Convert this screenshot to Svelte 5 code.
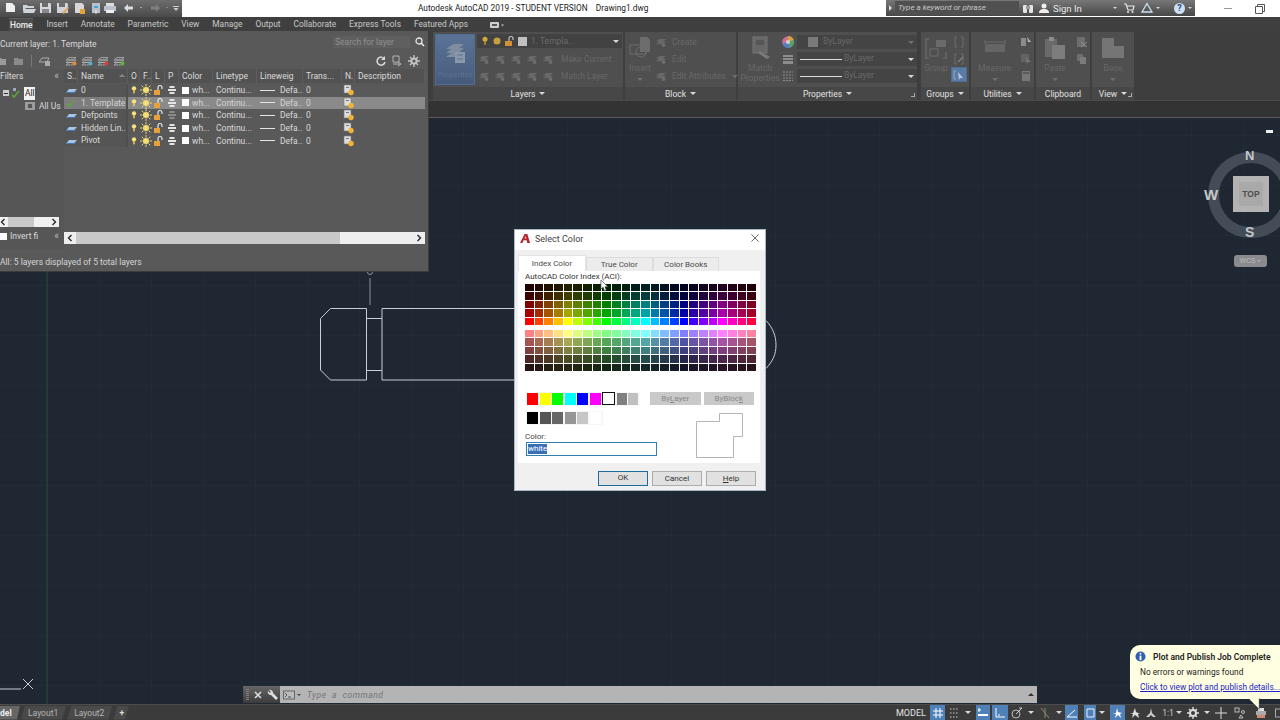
<script>
  const tabs = ['Home','Insert','Annotate','Parametric','View','Manage','Output','Collaborate','Express Tools','Featured Apps'];
  const layers = [
    { name:'0', cur:false },
    { name:'1. Template', cur:true },
    { name:'Defpoints', cur:false, noplot:true },
    { name:'Hidden Lin...', cur:false },
    { name:'Pivot', cur:false }
  ];
  function hsv(h,s,v){
    const f=(n)=>{const k=(n+h/60)%6;return Math.round(255*(v-v*s*Math.max(0,Math.min(k,4-k,1))));};
    return `rgb(${f(5)},${f(3)},${f(1)})`;
  }
  const hues = Array.from({length:24},(_,i)=>i*15);
  const top = [.12,.24,.5,.65,1].flatMap(v=>hues.map(h=>hsv(h,1,v)));
  const bot = [[.5,1],[.5,.65],[.5,.5],[.5,.3],[.5,.15]].flatMap(([s,v])=>hues.map(h=>hsv(h,s,v)));
  const std1 = ['#ff0000','#ffff00','#00ff00','#00ffff','#0000ff','#ff00ff'];
  const gray1 = ['#808080','#c0c0c0'];
  const std2 = ['#000000','#555555','#666666','#969696','#c6c6c6','#ffffff'];
  const toolsA = [0,1,2,3];
  const status = [
    {k:'grid',w:15,on:true,m:0},{k:'dots',w:18,m:0},{k:'arrow',w:10,m:3},{k:'infer',w:14,on:true,m:2},{k:'ortho',w:16,on:true,m:0},
    {k:'polar',w:18,m:0},{k:'arrow',w:10,m:0},{k:'osnap',w:18,m:0},{k:'arrow',w:10,m:1},{k:'angle',w:13,on:true,m:6},{k:'rect',w:12,on:true,m:0},
    {k:'arrow',w:12,m:2},{k:'anno',w:15,on:true,m:0},{k:'anno2',w:20,m:0},{k:'anno3',w:12,m:3},{k:'scale',w:16,m:0},{k:'arrow',w:5,m:4},
    {k:'gear',w:16,m:0},{k:'arrow',w:12,m:0},{k:'plus',w:16,m:0},{k:'iso',w:22,m:0},{k:'print',w:20,m:0},{k:'square',w:18,m:0}
  ];
</script>

{#snippet stack(c2)}
  <svg class="ico12" viewBox="0 0 12 12"><path d="M1 5 4 2.500h7L8 5zM1 7.500 4 5h7L8 7.500zM1 10 4 7.500h7L8 10z" fill="#5e5e5e" stroke="#bdbdbd" stroke-width=".7"/><circle cx="9.500" cy="8.500" r="2" fill={c2}/></svg>
{/snippet}
{#snippet layerFlat()}
  <svg class="ico12" viewBox="0 0 12 12"><path d="M1 9 4 5h8L9 9z" fill="#a9c4e8"/><path d="M1 9h8l3-4-3 3H2z" fill="#3f74b8"/></svg>
{/snippet}
{#snippet bulb()}
  <svg class="ico10" viewBox="0 0 10 12"><circle cx="5" cy="4" r="2.600" fill="#f7e27c"/><rect x="4" y="6" width="2" height="4" fill="#e5c652"/></svg>
{/snippet}
{#snippet sun()}
  <svg class="ico12" viewBox="0 0 12 12"><circle cx="6" cy="6" r="3" fill="#f5df73"/><path d="M6 0v2.500M6 9.500V12M0 6h2.500M9.500 6H12M1.700 1.700l1.800 1.800M8.500 8.500l1.800 1.800M10.300 1.700 8.500 3.500M3.500 8.500l-1.800 1.800" stroke="#e9d27a" stroke-width="1"/></svg>
{/snippet}
{#snippet lock()}
  <svg class="ico12" viewBox="0 0 12 12"><rect x="1" y="6" width="6" height="5" fill="#e8a13a"/><path d="M5 6V3.500a2 2 0 0 1 4 0V5" fill="none" stroke="#f0f0f0" stroke-width="1.100"/></svg>
{/snippet}
{#snippet printer(c)}
  <svg class="ico12" viewBox="0 0 12 12"><rect x="3.500" y="2" width="5" height="2" fill={c}/><rect x="2" y="5" width="8" height="2" fill={c}/><rect x="3.500" y="8" width="5" height="2" fill={c}/></svg>
{/snippet}
{#snippet note()}
  <svg class="ico12" viewBox="0 0 12 12"><rect x="1" y="1" width="7" height="8" fill="#ddd" stroke="#777" stroke-width=".6"/><rect x="3" y="3" width="3" height="1" fill="#777"/><circle cx="8" cy="8.500" r="2.700" fill="#f2b233"/></svg>
{/snippet}
{#snippet ghost(w)}
  <svg viewBox="0 0 14 12" class="ghost" style="width:{w}px"><path d="M1 5 5 2h8L9 5zM1 8 5 5h8L9 8z" fill="#777"/><circle cx="10" cy="9" r="2.200" fill="#7d7d7d"/></svg>
{/snippet}
{#snippet lar()}
  <svg class="sar" viewBox="0 0 6 8"><path d="M4.500 1 1.500 4l3 3" fill="none" stroke="#222" stroke-width="1.300"/></svg>
{/snippet}
{#snippet rar()}
  <svg class="sar" viewBox="0 0 6 8"><path d="M1.500 1l3 3-3 3" fill="none" stroke="#222" stroke-width="1.300"/></svg>
{/snippet}

<div class="root">
  <header class="title">
    <div class="qat">
      <svg viewBox="0 0 182 16" class="qat-ic">
        <path d="M6 3h6l3 3v6H6z" fill="#efefef"/>
        <path d="M23 5h4l1 1h6v2H26l-3 4zM25 9h11l-2 4H23z" fill="#cfd4da"/>
        <path d="M40 3h10l1 1v9H40z" fill="#d4d8dd"/><rect x="42" y="3" width="6" height="4" fill="#6d6d6d"/><rect x="42" y="9" width="7" height="4" fill="#888"/>
        <path d="M57 3h10l1 1v9H57z" fill="#cfd3d8"/><rect x="59" y="3" width="6" height="4" fill="#6d6d6d"/><path d="m62 13 6-6 1 1-5 6z" fill="#e1a052"/>
        <path d="M75 3h7l2 2v8h-9z" fill="#d8d8d8"/><rect x="80" y="9" width="5" height="5" fill="#e2a33d"/>
        <path d="M92 3h8v10h-8z" fill="#b9c0c8"/><path d="M94 6h4v2h-4z" fill="#39a9d9"/><path d="M96 10v4" stroke="#eee"/>
        <rect x="106" y="3" width="8" height="3" fill="#ddd"/><rect x="104" y="6" width="12" height="5" fill="#b9c3cf"/><rect x="106" y="10" width="8" height="3" fill="#eee"/>
        <path d="M124 8l4-4v2.500h5v3h-5V12z" fill="#d9dde2"/>
        <path d="m140 7 2 0-1 1.500z" fill="#ccc"/>
        <path d="M160 8l-4-4v2.500h-5v3h5V12z" fill="#7c7f83"/>
        <path d="m166 7 2 0-1 1.500z" fill="#999"/>
        <path d="M173 6h6v1h-6zm.5 2h5l-2.500 3z" fill="#ccc"/>
      </svg>
    </div>
    <div class="doc">Autodesk AutoCAD 2019 - STUDENT VERSION &nbsp;&nbsp; Drawing1.dwg</div>
    <div class="search">
      <span class="sa"></span>
      <span class="kw">Type a keyword or phrase</span>
      <div class="acct">
        <svg class="ico12" viewBox="0 0 12 12"><rect x="1" y="3" width="4" height="8" rx="1" fill="#e4e4e4"/><rect x="7" y="3" width="4" height="8" rx="1" fill="#e4e4e4"/><rect x="4" y="4" width="4" height="3" fill="#9c9c9c"/></svg>
        <svg class="ico12 user" viewBox="0 0 12 12"><circle cx="6" cy="4" r="2.500" fill="#eee"/><path d="M1 11c0-3 2-4 5-4s5 1 5 4z" fill="#eee"/></svg>
        <span class="sign">Sign In</span>
        <i class="tri sm"></i>
        <svg class="ico12 cart" viewBox="0 0 12 12"><path d="M1 2h2l2 6h5l1-4H4" fill="none" stroke="#e8e8e8" stroke-width="1.200"/><circle cx="5" cy="10" r="1" fill="#e8e8e8"/><circle cx="9.500" cy="10" r="1" fill="#e8e8e8"/></svg>
        <svg class="ico12 tria" viewBox="0 0 12 12"><path d="M6 1.500 11 10H1z" fill="none" stroke="#cfe0f0" stroke-width="1.300"/></svg>
        <i class="tri sm"></i>
        <span class="help">?</span>
        <i class="tri sm"></i>
      </div>
    </div>
    <div class="win">
      <span class="min"></span>
      <svg class="ico10" viewBox="0 0 10 10"><path d="M2.500 2.500v-2h7v7h-2M.5 2.500h7v7h-7z" fill="none" stroke="#555"/></svg>
    </div>
  </header>

  <nav class="tabs">
    {#each tabs as t, i}
      <span class="tab" class:active={i===0}>{t}</span>
    {/each}
    <svg class="cam" viewBox="0 0 14 8"><rect x="0" y="1" width="9" height="6" rx="1" fill="#cfcfcf"/><rect x="2" y="3" width="5" height="2" fill="#555"/><path d="m11 3.500 3 0-1.500 2z" fill="#bbb"/></svg>
  </nav>

  <section class="ribbon">
    <div class="panel p-layers">
      <div class="body layers-body">
        <div class="propbtn">
          <svg viewBox="0 0 24 24" class="bigic"><path d="M3 8 10 3h11l-6 5zM3 12l7-5h11l-6 5zM3 16l7-5h11l-6 5z" fill="#7f8da0"/><rect x="12" y="11" width="10" height="11" fill="#8a98ab"/><path d="M14 14h6M14 18h6" stroke="#5d708c"/></svg>
          <span>Properties</span>
        </div>
        <div class="lyr-tools">
          <div class="combo">
            <svg class="ico10" viewBox="0 0 10 12"><circle cx="5" cy="4" r="3" fill="#d0a93c"/><rect x="4" y="6.500" width="2" height="4" fill="#b9952f"/></svg>
            <svg class="ico10" viewBox="0 0 10 10"><circle cx="5" cy="5" r="3.500" fill="#c79f3c"/></svg>
            <svg class="ico12" viewBox="0 0 12 12"><rect x="1" y="6" width="7" height="5" fill="#d39032"/><path d="M5 6V3.500a2 2 0 0 1 4 0V5" fill="none" stroke="#c9c9c9" stroke-width="1.100"/></svg>
            <span class="sw"></span>
            <span class="ct">1. Templa...</span>
            <i class="tri"></i>
          </div>
          <div class="tool-row wide">
            {#each toolsA as _}{@render ghost(12)}{/each}{@render ghost(12)}<span class="dis">Make Current</span>
          </div>
          <div class="tool-row wide">
            {#each toolsA as _}{@render ghost(12)}{/each}{@render ghost(12)}<span class="dis">Match Layer</span>
          </div>
        </div>
      </div>
      <div class="lbl">Layers <i class="tri"></i></div>
    </div>

    <div class="panel p-block">
      <div class="body block-body">
        <div class="bigcol insert">
          <svg viewBox="0 0 24 24" class="bigic"><path d="M12 1h7l3 3v12h-10z" fill="#6d6d6d"/><rect x="2" y="9" width="16" height="9" fill="none" stroke="#6d6d6d"/><circle cx="13" cy="16" r="5" fill="none" stroke="#6d6d6d"/></svg>
          <span class="dis">Insert</span><i class="tri dim"></i>
        </div>
        <div class="blk-list">
          <div class="tool-row">{@render ghost(12)}<span class="dis">Create</span></div>
          <div class="tool-row">{@render ghost(12)}<span class="dis">Edit</span></div>
          <div class="tool-row">{@render ghost(12)}<span class="dis">Edit Attributes</span><i class="tri dim"></i></div>
        </div>
      </div>
      <div class="lbl">Block <i class="tri"></i></div>
    </div>

    <div class="panel p-props">
      <div class="body props-body">
        <div class="bigcol match">
          <svg viewBox="0 0 24 24" class="bigic"><rect x="5" y="1" width="14" height="16" fill="#676767" stroke="#767676"/><rect x="8" y="4" width="8" height="5" fill="#565656"/><path d="m12 15 10 6-3 2-9-6z" fill="#7a7a7a"/></svg>
          <span class="dis">Match<br/>Properties</span>
        </div>
        <div class="prop-list">
          <div class="prop-row">
            <svg class="wheel" viewBox="0 0 12 12"><circle cx="6" cy="6" r="5.800" fill="#cc6e9a"/><path d="M6 6V0a6 6 0 0 1 5.700 4z" fill="#d6a23c"/><path d="M6 6 11.700 4A6 6 0 0 1 8 11.700z" fill="#55a56a"/><path d="M6 6 8 11.700A6 6 0 0 1 .5 8z" fill="#4f7fc0"/><circle cx="6" cy="6" r="2" fill="#d2d2d2"/></svg>
            <div class="pcombo"><span class="sw big"></span><span class="dis indent">ByLayer</span><i class="tri dim right"></i></div>
          </div>
          <div class="prop-row">
            <svg class="wheel" viewBox="0 0 12 12"><path d="M1 2h10v2H1zM1 5h10v2H1zM1 8h10v3H1z" fill="#8c8c8c"/></svg>
            <div class="pcombo"><span class="ln"></span><span class="dis">ByLayer</span><i class="tri right"></i></div>
          </div>
          <div class="prop-row">
            <svg class="wheel" viewBox="0 0 12 12"><path d="M1 2h10M1 5h10M1 8h10M1 10.500h10" stroke="#8c8c8c" stroke-dasharray="2 1"/></svg>
            <div class="pcombo"><span class="ln"></span><span class="dis">ByLayer</span><i class="tri right"></i></div>
          </div>
        </div>
      </div>
      <div class="lbl">Properties <i class="tri"></i><span class="launch"></span></div>
    </div>

    <div class="panel p-groups">
      <div class="body groups-body">
        <div class="bigcol">
          <svg viewBox="0 0 24 24" class="bigic"><path d="M5 3H2v19h3M19 22h3v-6" fill="none" stroke="#6e6e6e" stroke-width="1.200"/><rect x="6" y="13" width="8" height="7" fill="none" stroke="#6e6e6e"/><path d="M12 4h10v7H12z" fill="#6a6a6a"/></svg>
          <span class="dis">Group</span>
        </div>
        <div class="grp-list">
          <svg class="ico12" viewBox="0 0 12 12"><path d="M4 1H2v10h2M8 1h2v10H8" fill="none" stroke="#6e6e6e"/></svg>
          <svg class="ico12" viewBox="0 0 12 12"><path d="M4 1H2v10h2M8 1h2v10H8" fill="none" stroke="#6e6e6e"/><path d="m5 9 5-5" stroke="#808080" stroke-width="1.500"/></svg>
          <span class="sel"><svg class="ico12" viewBox="0 0 12 12"><path d="M5 3 10 9H7l-1 2z" fill="#b9c6d6"/><path d="M1 2v8h2M3 2H1" fill="none" stroke="#98a8bc"/></svg></span>
        </div>
      </div>
      <div class="lbl">Groups <i class="tri"></i></div>
    </div>

    <div class="panel p-util">
      <div class="body util-body">
        <div class="bigcol">
          <svg viewBox="0 0 24 24" class="bigic"><rect x="2" y="8" width="20" height="8" fill="#656565"/><path d="M2 6h20M2 4v4M22 4v4" stroke="#6d6d6d"/></svg>
          <span class="dis">Measure</span><i class="tri dim"></i>
        </div>
        <div class="grp-list">
          <svg class="ico12" viewBox="0 0 12 12"><path d="M1 2h5v8H1z" fill="#8a8a8a"/><path d="m7 1 4 5H8z" fill="#b5b5b5"/></svg>
          <svg class="ico12" viewBox="0 0 12 12"><rect x="1" y="1" width="8" height="8" fill="#636363"/><path d="m6 4 5 5H8l-1 3z" fill="#767676"/></svg>
          <svg class="ico12" viewBox="0 0 12 12"><rect x="2" y="1" width="8" height="10" fill="#777"/><rect x="3" y="2" width="6" height="2" fill="#5a5a5a"/></svg>
        </div>
      </div>
      <div class="lbl">Utilities <i class="tri"></i></div>
    </div>

    <div class="panel p-clip">
      <div class="body util-body">
        <div class="bigcol">
          <svg viewBox="0 0 24 24" class="bigic"><path d="M2 3h12v18H2z" fill="#6a6a6a"/><rect x="6" y="1" width="5" height="4" fill="#8c8c8c"/><rect x="9" y="9" width="13" height="14" fill="#7d7d7d"/></svg>
          <span class="dis">Paste</span><i class="tri dim"></i>
        </div>
        <div class="grp-list">
          <svg class="ico12" viewBox="0 0 12 12"><rect x="1" y="1" width="8" height="10" fill="#6e6e6e"/><path d="m5 6 6 5M11 6l-6 5" stroke="#939393"/></svg>
          <svg class="ico12" viewBox="0 0 12 12"><rect x="1" y="1" width="6" height="7" fill="#6e6e6e"/><rect x="4" y="4" width="6" height="7" fill="#7b7b7b"/></svg>
        </div>
      </div>
      <div class="lbl">Clipboard</div>
    </div>

    <div class="panel p-view">
      <div class="body view-body">
        <div class="bigcol">
          <svg viewBox="0 0 24 24" class="bigic"><path d="M1 2h12v8h10v12H1z" fill="#757575"/></svg>
          <span class="dis">Base</span><i class="tri dim"></i>
        </div>
      </div>
      <div class="lbl">View <i class="tri"></i><span class="launch"></span></div>
    </div>
  </section>
  <div class="strip"></div>

  <main class="canvas">
    <svg class="drawing" viewBox="0 118 1280 586" width="1280" height="586">
      <path d="M47 118V704" stroke="#2c4a3a" stroke-width="1"/>
      <g fill="none" stroke="#c9ced4" stroke-width="1">
        <path d="M330.500 308.500H366.500V380H330.500L320.500 370V318.500Z"/>
        <path d="M367 318.500H382M367 370.500H382"/>
        <path d="M514 308.500H382V380H514"/>
        <path d="M370 278V305" stroke="#8b929a"/>
        <circle cx="370" cy="272" r="2.500" stroke="#8b929a"/>
        <path d="M766 320.500C773 328 776 336 776 345C776 354 773 361 766 368.500"/>
        <path d="M0 689H21"/>
        <path d="M23 679 33 689M33 679 23 689"/>
      </g>
    </svg>

    <div class="pin"></div>
    <div class="compass">
      <div class="ring"></div>
      <span class="dir n">N</span><span class="dir w">W</span><span class="dir s">S</span>
      <div class="cube"><span>TOP</span></div>
      <div class="wcs">WCS <i class="tri dim2"></i></div>
    </div>

    <div class="cmd">
      <div class="cmd-l">
        <span class="grip"></span>
        <svg class="ico10" viewBox="0 0 10 10"><path d="m2 2 6 6M8 2 2 8" stroke="#ddd" stroke-width="1.600"/></svg>
        <svg class="ico12" viewBox="0 0 12 12"><path d="M2 1a3 3 0 0 1 4 3l5 5-2 2-5-5a3 3 0 0 1-3-4l2 2 1-1z" fill="#ddd"/></svg>
      </div>
      <div class="cmd-r">
        <svg class="ico12" viewBox="0 0 12 12"><rect x=".5" y="2" width="11" height="8" fill="#bbb" stroke="#666"/><path d="m2 4 2 2-2 2M5 8h3" fill="none" stroke="#555"/></svg>
        <i class="tri cmdt"></i>
        <span class="prompt">Type a command</span>
        <i class="tri up"></i>
      </div>
    </div>
  </main>

  <footer class="status">
    <div class="ltabs">
      <span class="lt model">del</span>
      <span class="lt">Layout1</span>
      <span class="lt">Layout2</span>
      <span class="lt plus">+</span>
    </div>
    <div class="sright">
      <span class="model-t">MODEL</span>
      {#each status as s}
        <span class="st" class:on={s.on} style="width:{s.w}px;margin-right:{s.m}px">
          {#if s.k==='arrow'}<i class="tri"></i>
          {:else if s.k==='grid'}<svg class="ico10" viewBox="0 0 10 10"><path d="M3 0v10M7 0v10M0 3h10M0 7h10" stroke="#fff"/></svg>
          {:else if s.k==='dots'}<svg class="ico10" viewBox="0 0 10 10"><path d="M1 1h8M1 5h8M1 9h8" stroke="#ccc" stroke-width="1.200" stroke-dasharray="1.500 1.500"/></svg>
          {:else if s.k==='infer'}<svg class="ico10" viewBox="0 0 10 10"><path d="M0 7h10" stroke="#fff" stroke-width="2"/><path d="M1 0v4M0 2h3" stroke="#fff"/></svg>
          {:else if s.k==='ortho'}<svg class="ico10" viewBox="0 0 10 10"><path d="M1 0v9h9" fill="none" stroke="#fff"/><path d="M3 7h2" stroke="#fff"/></svg>
          {:else if s.k==='polar'}<svg class="ico12" viewBox="0 0 12 12"><circle cx="5" cy="7" r="4" fill="none" stroke="#bbb"/><path d="m5 7 6-6M8 1h3" stroke="#ccc"/></svg>
          {:else if s.k==='osnap'}<svg class="ico12" viewBox="0 0 12 12"><path d="m2 1 8 10" stroke="#aa7b7b"/><path d="M6 1v10" stroke="#6c9a6c"/></svg>
          {:else if s.k==='angle'}<svg class="ico10" viewBox="0 0 10 10"><path d="M0 9h10M0 9l8-7" fill="none" stroke="#fff"/></svg>
          {:else if s.k==='rect'}<svg class="ico10" viewBox="0 0 10 10"><path d="M2 1h7v8H2z" fill="none" stroke="#e8f0fa"/></svg>
          {:else if s.k==='anno'}<svg class="ico12" viewBox="0 0 12 12"><path d="M5 1 6 5l4 1-2 1 1 4-3-3-3 3 1-4-3-1h3z" fill="#fff"/></svg>
          {:else if s.k==='anno2'}<svg class="ico12" viewBox="0 0 12 12"><path d="M6 1 7 5l4 2-2 0 1 4-4-3-3 3 1-4-3-1h3z" fill="#ddd"/></svg>
          {:else if s.k==='anno3'}<svg class="ico12" viewBox="0 0 12 12"><path d="M6 1 7 6l4 4H8L6 8l-2 2H1l4-4z" fill="#ccc"/></svg>
          {:else if s.k==='scale'}<span class="one">1:1</span>
          {:else if s.k==='gear'}<svg class="ico12" viewBox="0 0 12 12"><circle cx="6" cy="6" r="3" fill="none" stroke="#ddd" stroke-width="2"/><path d="M6 0v3M6 9v3M0 6h3M9 6h3M2 2l2 2M8 8l2 2M10 2 8 4M4 8l-2 2" stroke="#ddd" stroke-width="1.400"/></svg>
          {:else if s.k==='plus'}<svg class="ico12" viewBox="0 0 12 12"><path d="M6 0v12M0 6h12" stroke="#ddd"/></svg>
          {:else if s.k==='iso'}<svg class="ico12" viewBox="0 0 12 12"><rect x="1" y="1" width="4" height="4" fill="none" stroke="#bbb"/><circle cx="9" cy="5" r="1.500" fill="none" stroke="#bbb"/><path d="M5 11h4L7 8z" fill="none" stroke="#bbb"/></svg>
          {:else if s.k==='print'}<svg class="ico12" viewBox="0 0 12 12"><rect x="3" y="1" width="6" height="3" fill="#ddd"/><rect x="1" y="4" width="10" height="4" fill="#aaa"/><rect x="2" y="8" width="8" height="3" fill="#c98a70"/></svg>
          {:else if s.k==='square'}<svg class="ico10" viewBox="0 0 10 10"><rect x=".5" y="1" width="8" height="8" fill="none" stroke="#aaa"/></svg>
          {/if}
        </span>
      {/each}
    </div>
  </footer>

  <aside class="lm">
    <div class="lm-top">
      <span class="cur">Current layer: 1. Template</span>
      <span class="find">Search for layer</span>
      <svg class="ico10 mag" viewBox="0 0 10 10"><circle cx="4" cy="4" r="3" fill="none" stroke="#e8e8e8" stroke-width="1.300"/><path d="m6 6 3 3" stroke="#e8e8e8" stroke-width="1.600"/></svg>
    </div>
    <div class="lm-tools">
      <div class="lt-left">
        <svg class="ico10" viewBox="0 0 10 10"><path d="M0 2h4l1 1h4v6H0z" fill="#9a9a9a"/></svg>
        <svg class="ico10" viewBox="0 0 10 10"><path d="M0 2h4l1 1h4v6H0z" fill="#8a8a8a"/></svg>
        <span class="vsep"></span>
        <svg class="ico12" viewBox="0 0 12 12"><path d="M0 7 3 3h7L8 7z" fill="none" stroke="#aaa"/><rect x="6" y="6" width="5" height="5" fill="#aaa"/></svg>
      </div>
      <div class="lt-mid">
        {@render stack('#e88a2c')}
        {@render stack('#58aecf')}
        {@render stack('#d93c3c')}
        {@render stack('#5fb33f')}
      </div>
      <div class="lt-right">
        <svg class="ico10" viewBox="0 0 10 10"><path d="M8.500 3A4 4 0 1 0 9 6" fill="none" stroke="#d8d8d8" stroke-width="1.500"/><path d="M9 0v4H5z" fill="#d8d8d8"/></svg>
        <svg class="ico12" viewBox="0 0 12 12"><path d="M2 1h6v6H2zM2 9h8M7 7l3 2-3 2" fill="none" stroke="#b5b5b5"/></svg>
        <svg class="ico12" viewBox="0 0 12 12"><circle cx="6" cy="6" r="2.600" fill="none" stroke="#c4c4c4" stroke-width="2"/><path d="M6 0v3M6 9v3M0 6h3M9 6h3M2 2l2 2M8 8l2 2M10 2 8 4M4 8l-2 2" stroke="#c4c4c4" stroke-width="1.400"/></svg>
      </div>
    </div>
    <div class="lm-main">
      <div class="filters">
        <div class="f-head"><span>Filters</span><span class="chev">«</span></div>
        <div class="tree">
          <div class="tr1">
            <span class="minus"></span>
            <svg class="ico10" viewBox="0 0 10 10"><rect x="2" y="0" width="3" height="3" fill="#9ab"/><path d="M1 7l2 2 5-6" fill="none" stroke="#5aa83a" stroke-width="1.500"/></svg>
            <span class="allb">All</span>
          </div>
          <div class="tr2">
            <svg class="ico10" viewBox="0 0 10 10"><rect x="0" y="1" width="10" height="8" fill="#9b9b9b"/><rect x="3" y="3" width="4" height="4" fill="#555"/></svg>
            <span>All Us</span>
          </div>
        </div>
        <div class="fscroll">{@render lar()}<span class="thumb"></span><span class="rarw">{@render rar()}</span></div>
        <div class="invert"><span class="chk"></span><span>Invert fi</span><span class="chev">«</span></div>
      </div>
      <div class="tablewrap">
        <div class="grid head">
          <span>S..</span><span class="nm">Name <i class="up2"></i></span><span>O</span><span>F..</span><span>L</span><span>P</span><span>Color</span><span>Linetype</span><span>Lineweig</span><span>Trans...</span><span>N.</span><span>Description</span>
        </div>
        <div class="rows">
          {#each layers as l}
            <div class="grid row" class:sel2={l.cur}>
              <span class="c-s">
                {#if l.cur}<svg class="ico12" viewBox="0 0 12 12"><path d="M1 7l3 3 7-8-7 5z" fill="#58a93a"/></svg>{:else}{@render layerFlat()}{/if}
              </span>
              <span class="c-n">{l.name}</span>
              <span class="ci">{@render bulb()}</span>
              <span class="ci">{@render sun()}</span>
              <span class="ci">{@render lock()}</span>
              <span class="ci">{@render printer(l.noplot ? '#8a8a8a' : '#e4e4e4')}</span>
              <span class="c-col"><b></b>wh...</span>
              <span>Continu...</span>
              <span class="c-lw"><b></b>Defa...</span>
              <span>0</span>
              <span class="ci">{@render note()}</span>
              <span></span>
            </div>
          {/each}
        </div>
        <div class="spacer"></div>
        <div class="hscroll"><span class="har">{@render lar()}</span><span class="hthumb"></span><span class="har r">{@render rar()}</span></div>
      </div>
    </div>
    <div class="lm-status">All: 5 layers displayed of 5 total layers</div>
  </aside>

  <div class="dlg">
    <div class="d-title">
      <svg class="alogo" viewBox="0 0 12 12"><path d="M0 11 5 1h3l3 10H8L7.200 8H4L2.500 11z" fill="#b8282e"/><path d="M5 6h2L6 3.500z" fill="#f3d5d5"/></svg>
      <span>Select Color</span>
      <svg class="x" viewBox="0 0 10 10"><path d="m.5.500 9 9M9.500.500l-9 9" stroke="#444" stroke-width="1"/></svg>
    </div>
    <div class="d-tabs">
      <span class="dt act">Index Color</span>
      <span class="dt">True Color</span>
      <span class="dt">Color Books</span>
    </div>
    <div class="pane">
      <div class="aci">AutoCAD Color Index (ACI):</div>
      <div class="pal">{#each top as c}<i style="background:{c}"></i>{/each}</div>
      <div class="pal second">{#each bot as c}<i style="background:{c}"></i>{/each}</div>
      <div class="stdrow">
        <div class="swatches">
          {#each std1 as c}<i style="background:{c}"></i>{/each}
          <i class="cur-w"></i>
          {#each gray1 as c}<i class="tight" style="background:{c}"></i>{/each}
        </div>
        <div class="bybtns"><span>By<u>L</u>ayer</span><span>ByBloc<u>k</u></span></div>
      </div>
      <div class="lowrow">
        <div class="lowleft">
          <div class="swatches two">{#each std2 as c}<i style="background:{c}"></i>{/each}</div>
          <label for="cv">Color:</label>
          <div class="cinput" id="cv"><span>white</span></div>
        </div>
        <svg class="preview" viewBox="0 0 48 46"><path d="M.5 8.500H23.500V.5H46.500V23.500H37.500V44.500H.5Z" fill="#fff" stroke="#b5b5b5"/></svg>
      </div>
    </div>
    <div class="d-btns">
      <span class="btn def">OK</span>
      <span class="btn">Cancel</span>
      <span class="btn"><u>H</u>elp</span>
    </div>
  </div>

  <svg class="cursor" viewBox="0 0 10 14"><path d="M1 1v10l2.500-2 1.500 4 2-1-1.500-3.500H9z" fill="#fff" stroke="#333" stroke-width=".7"/></svg>

  <div class="toast">
    <div class="t-h">
      <svg class="info" viewBox="0 0 12 12"><circle cx="6" cy="6" r="5.500" fill="#2d5fb5"/><circle cx="6" cy="3" r="1" fill="#fff"/><rect x="5" y="5" width="2" height="5" fill="#fff"/></svg>
      <span>Plot and Publish Job Complete</span>
    </div>
    <div class="t-b">No errors or warnings found</div>
    <div class="t-l">Click to view plot and publish details...</div>
    <svg class="tail" viewBox="0 0 20 16"><path d="M0 0 14 14V0z" fill="#ffffe1"/><path d="M1 1 14 14V0" fill="none" stroke="#222" stroke-width=".6"/></svg>
  </div>
</div>

<style>
  :global(body){margin:0;background:#1f2733;overflow:hidden}
  .root{position:relative;width:1280px;height:720px;display:flex;flex-direction:column;overflow:hidden;font-family:Roboto,"Noto Sans",sans-serif;font-size:8.500px;color:#dcdcdc;background:#1f2733}
  svg{display:block;flex:none}
  .ico12{width:12px;height:12px}
  .ico10{width:10px;height:10px}
  .tri{display:inline-block;width:0;height:0;border-left:3px solid transparent;border-right:3px solid transparent;border-top:3px solid #d8d8d8;vertical-align:middle}
  .tri.sm{border-width:2px 2px 0;}
  .tri.dim{border-top-color:#6f6f6f}

  .title{height:17px;background:#fff;display:flex;align-items:stretch;color:#222}
  .qat{width:182px;background:linear-gradient(#6d6d6d,#4a4a4a)}
  .qat-ic{width:182px;height:16px}
  .doc{margin-left:236px;width:468px;font-size:8.300px;line-height:16px;color:#1a1a1a;white-space:nowrap}
  .search{width:309px;background:linear-gradient(#777,#474747);display:flex;align-items:center;height:16px}
  .sa{width:0;height:0;border-top:3px solid transparent;border-bottom:3px solid transparent;border-left:3px solid #ddd;margin:0 3px 0 3px}
  .kw{font-style:italic;color:#c6c6c6;font-size:8px;background:#505050;line-height:14px;width:124px;padding-left:3px;box-sizing:border-box;white-space:nowrap;flex:none}
  .acct{flex:1;height:16px;display:flex;align-items:center;gap:3px;padding-left:3px;box-sizing:border-box}
  .user{margin-left:1px}
  .sign{color:#e8e8e8;font-size:9.500px;width:57px;white-space:nowrap;flex:none}
  .cart{margin-left:3px}
  .tria{margin-left:3px}
  .help{width:11px;height:11px;border-radius:50%;background:#cfe0f2;color:#1d4e89;font-weight:700;text-align:center;line-height:11px;font-size:9px;margin-left:11px;flex:none}
  .win{margin-left:29px;display:flex;align-items:center;gap:23px}
  .min{width:8px;height:1px;background:#999}

  .tabs{height:15px;background:#3f3f3f;display:flex;align-items:center;gap:12.900px;padding-left:10px;color:#c8c8c8;font-size:8.400px;white-space:nowrap}
  .tab{line-height:13px}
  .tab.active{background:#4d4d4d;color:#eee;padding:0 1px;margin-left:-1px;font-weight:500;border-top:1px solid #606060}
  .cam{width:14px;height:8px;margin-left:9px}

  .ribbon{height:68px;display:flex;align-items:stretch;padding-left:433px;background:#3e3e3e;gap:2px}
  .panel{display:flex;flex-direction:column;background:#4f4f4f;box-sizing:border-box}
  .body{flex:1;display:flex;min-height:0}
  .lbl{height:13px;background:#474747;color:#e2e2e2;font-size:8.500px;display:flex;align-items:center;justify-content:center;gap:4px;position:relative}
  .launch{position:absolute;right:2px;bottom:3px;width:3px;height:3px;border:1px solid #aaa;border-width:0 1px 1px 0}
  .dis{color:#686868;font-size:8.500px;line-height:9.500px;white-space:nowrap}
  .p-layers{width:190px}.p-block{width:111px}.p-props{width:179px}.p-groups{width:48px;margin-left:2px}.p-util{width:63px}.p-clip{width:54px}.p-view{width:42px}

  .layers-body{padding:2px 0 2px 2px;gap:2px}
  .propbtn{width:40px;background:linear-gradient(#5a7396,#475c7c);border:1px solid #4f6c93;box-sizing:border-box;display:flex;flex-direction:column;align-items:center;color:#5d7291;font-size:7.500px;padding-top:6px;height:51px}
  .bigic{width:24px;height:24px}
  .propbtn span{margin-top:5px}
  .lyr-tools{flex:1;display:flex;flex-direction:column}
  .combo{height:14px;background:#424242;display:flex;align-items:center;gap:2px;padding-left:3px;margin-bottom:3px;margin-right:1px}
  .sw{width:9px;height:9px;background:#c0c0c0;flex:none}
  .ct{color:#6b6b6b;margin-left:2px;flex:1}
  .combo .tri{margin-right:3px}
  .tool-row{height:17px;display:flex;align-items:center;gap:2px;padding-left:1px}
  .tool-row.wide{gap:4px}
  .ghost{height:11px;opacity:.65}
  .tool-row .dis{margin-left:3px}

  .block-body{padding:2px 0 0 3px}
  .bigcol{display:flex;flex-direction:column;align-items:center;width:36px;padding-top:2px;gap:4px;text-align:center}
  .insert{width:30px}
  .blk-list{flex:1;padding-left:2px}
  .blk-list .tool-row{height:17px}
  .blk-list .tri{margin-left:4px}

  .props-body{padding:2px 0 0 2px}
  .match{width:40px;flex:none}
  .prop-list{flex:1;display:flex;flex-direction:column;gap:1px;padding-left:2px}
  .prop-row{display:flex;align-items:center;gap:3px;height:16px}
  .wheel{width:12px;height:12px}
  .pcombo{flex:1;height:14px;display:flex;align-items:center;background:#444;position:relative;padding-left:3px;gap:2px}
  .sw.big{width:10px;height:10px;background:#7a7a7a;margin-left:8px}
  .indent{margin-left:3px}
  .ln{width:42px;height:1px;background:#dedede;flex:none}
  .right{position:absolute;right:3px;top:6px}

  .groups-body,.util-body,.view-body{padding-top:2px}
  .groups-body .bigcol{width:30px}
  .grp-list{display:flex;flex-direction:column;gap:5px;align-items:center;padding-top:2px;width:16px;flex:none}
  .sel{width:16px;height:15px;background:#5a7ba6;border:1px solid #4f6c93;box-sizing:border-box;display:flex;align-items:center;justify-content:center;margin-top:-3px}
  .util-body .bigcol{flex:1;width:auto}
  .view-body .bigcol{width:100%}

  .strip{height:18px;box-sizing:border-box;background:#333;border-bottom:1px solid #5a5a5a;box-shadow:inset 0 1px 0 #4a4a4a}

  .canvas{position:relative;flex:1;min-height:0;background-color:#1f2733;background-image:linear-gradient(90deg,#232b37 1px,transparent 1px),linear-gradient(#232b37 1px,transparent 1px);background-size:52px 50px;background-position:47px 17px}
  .drawing{position:absolute;left:0;top:0}

  .pin{position:absolute;left:1266px;top:12px;width:7px;height:3px;background:#eee}
  .compass{position:absolute;left:1200px;top:20px;width:80px;height:140px;overflow:hidden}
  .ring{position:absolute;left:8px;top:14px;width:86px;height:86px;border:11px solid #434c57;border-radius:50%;box-sizing:border-box}
  .dir{position:absolute;font-weight:700;color:#c5c7ca;font-size:13px;line-height:15px;font-family:"Liberation Sans",sans-serif}
  .dir.n{left:45px;top:10px}.dir.w{left:4px;top:49px;font-size:15px}.dir.s{left:45px;top:87px;font-size:14px}
  .cube{position:absolute;left:33px;top:38px;width:36px;height:36px;background:#a9a9a9;display:flex;align-items:center;justify-content:center;box-sizing:border-box;border:6px solid #b3b3b3}
  .cube span{font-size:8.500px;font-weight:600;color:#4d4d4d;font-family:"Liberation Sans",sans-serif}
  .wcs{position:absolute;left:34px;top:117px;width:33px;height:12px;border-radius:3px;background:#8a8a8f;color:#b9b9bb;font-size:7.500px;line-height:12px;text-align:center}
  .tri.dim2{border-top-color:#b0b0b0;border-width:2px 2px 0}

  .cmd{position:absolute;left:243px;bottom:1px;width:794px;height:17px;display:flex}
  .cmd-l{width:37px;background:linear-gradient(#656565,#3c3c3c);display:flex;align-items:center;gap:4px;padding-left:3px;box-sizing:border-box}
  .grip{width:3px;height:11px;background:repeating-linear-gradient(#808080 0 1px,transparent 1px 2px)}
  .cmd-r{flex:1;background:#b4b4b4;display:flex;align-items:center;padding-left:3px;position:relative}
  .cmdt{border-top-color:#444;margin:0 6px 0 2px;border-width:2px 2px 0}
  .prompt{font-style:italic;color:#757575;font-size:8.500px;word-spacing:3px;letter-spacing:.5px}
  .tri.up{position:absolute;right:3px;top:7px;border-top:0;border-bottom:3px solid #333}

  .status{height:16px;background:#3b3b3b;border-top:1px solid #4d4d4d;box-sizing:border-box;display:flex;justify-content:space-between;align-items:center}
  .ltabs{display:flex;align-items:center;height:100%;color:#b4b4b4;font-size:8.500px}
  .lt{padding:0 8px 0 7px;background:#4a4a4a;margin-right:1px;line-height:14px;clip-path:polygon(4px 0,100% 0,calc(100% - 4px) 100%,0 100%)}
  .lt.model{width:20px;box-sizing:border-box;padding:0;color:#eee;background:#666;font-weight:700;clip-path:polygon(0 0,100% 0,calc(100% - 3px) 100%,0 100%)}
  .lt.plus{padding:0 5px 0 6px;color:#ddd;font-weight:700;margin-left:0}
  .sright{display:flex;align-items:center;height:100%;width:384px;flex:none}
  .model-t{color:#e4e4e4;font-size:9px;width:34px;flex:none}
  .st{height:15px;display:flex;align-items:center;justify-content:center;flex:none}
  .st.on{background:#4f80b8}
  .one{font-size:8.500px;color:#ccc}

  .lm{position:absolute;left:0;top:31px;width:429px;height:241px;background:#595959;box-sizing:border-box;border-right:1.500px solid #3c3c3c;border-bottom:1.500px solid #3c3c3c;display:flex;flex-direction:column;color:#dadada}
  .lm-top{height:20px;display:flex;align-items:center;position:relative;font-size:8.500px;box-sizing:border-box;padding-top:3px}
  .cur{flex:1;padding-top:3px}
  .find{width:77px;background:#5f5f5f;color:#8f8f8f;padding:0 2px;box-sizing:border-box;margin-top:-2px;margin-right:5px;line-height:12px}
  .mag{margin:-2px 3px 0 0}
  .lm-tools{height:18px;display:flex;align-items:center;padding-top:1px;box-sizing:border-box}
  .lt-left{display:flex;align-items:center;gap:7px;width:68px;margin-left:-3px;flex:none}
  .vsep{width:1px;height:12px;background:#777}
  .lt-mid{display:flex;gap:4px;flex:1}
  .lt-right{display:flex;gap:5px;align-items:center;margin-right:8px}
  .lm-main{display:flex;height:180px}
  .filters{width:64px;flex:none;display:flex;flex-direction:column;background:#565656;position:relative}
  .f-head{height:14px;display:flex;justify-content:space-between;align-items:center;padding-right:5px;color:#dadada}
  .chev{color:#b9b9b9;font-size:10px;line-height:8px}
  .tree{height:134px;position:relative}
  .tr1{display:flex;align-items:center;padding-left:3px;gap:2px;height:14px;margin-top:3px}
  .minus{width:6px;height:6px;background:#ccc;border:0;position:relative;flex:none}
  .minus::after{content:'';position:absolute;left:1px;right:1px;top:2.500px;height:1px;background:#333}
  .allb{background:#f2f2f2;color:#222;padding:0 1px;line-height:13px;margin-left:1px;width:9px;text-align:center}
  .tr2{display:flex;align-items:center;gap:4px;padding-left:25px;margin-top:1px}
  .tr2 span{white-space:nowrap}
  .sar{width:6px;height:8px}
  .fscroll{width:59px;height:10px;background:#f0f0f0;display:flex;align-items:center;box-sizing:border-box}
  .rarw{margin-left:auto;padding-right:2px}
  .thumb{width:26px;height:100%;background:#c8c8c8;margin-left:2px}
  .invert{display:flex;align-items:center;gap:3px;margin-top:3px;height:12px;padding-right:5px}
  .invert .chev{margin-left:auto}
  .chk{width:7px;height:7px;background:#fff;flex:none}
  .tablewrap{flex:1;display:flex;flex-direction:column;min-width:0;padding-right:3px}
  .grid{display:grid;grid-template-columns:14px 50px 12px 12px 13px 14px 34px 44px 46px 39px 13px 1fr;align-items:center;white-space:nowrap}
  .head{height:14px;background:#525252}
  .head>span{padding-left:3px;border-right:1px solid #5e5e5e;line-height:14px;overflow:hidden;box-sizing:border-box}
  .nm{position:relative}
  .up2{position:absolute;right:2px;top:5px;width:0;height:0;border:3px solid transparent;border-top:0;border-bottom:3px solid #888}
  .rows{background:#595959;padding-top:1px}
  .row{height:12.600px;font-size:8.500px}
  .row>span{padding-left:3px;overflow:hidden;box-sizing:border-box;line-height:12px}
  .row>.ci{padding-left:0;display:flex;justify-content:center;align-items:center;height:12px}
  .c-s{padding-left:0!important;display:flex;justify-content:center;background:#555;height:12.600px;align-items:center}
  .c-n{background:#555;height:12.600px;border-right:2px solid #4f4f4f}
  .sel2{background:#8a8a8a;color:#d4d4d4}
  .sel2 .c-s,.sel2 .c-n{background:#7d7d7d}
  .c-col{display:flex;align-items:center;gap:3px}
  .c-col b{width:7px;height:7px;background:#fff;flex:none}
  .c-lw{display:flex;align-items:center;gap:5px}
  .c-lw b{width:15px;height:1px;background:#e4e4e4;flex:none}
  .spacer{flex:1}
  .hscroll{height:12px;background:#eee;display:flex;align-items:center;margin-bottom:5px}
  .har{width:12px;display:flex;justify-content:center}
  .har.r{margin-left:auto}
  .hthumb{width:264px;height:100%;background:#c9c9c9}
  .lm-status{font-size:8.500px;padding-top:8px;color:#d5d5d5;line-height:10px}

  .dlg{position:absolute;left:514px;top:229px;width:252px;height:262px;background:#f0f0f0;border:1px solid #a9b8c4;box-sizing:border-box;display:flex;flex-direction:column;color:#333;font-size:8px}
  .d-title{height:17px;background:#fff;display:flex;align-items:center;padding-left:5px;gap:4px;position:relative;font-size:9px;color:#444;flex:none}
  .alogo{width:11px;height:11px}
  .x{width:8px;height:8px;position:absolute;right:6px;top:4px}
  .d-tabs{display:flex;height:24px;padding:9px 0 0 3px;box-sizing:border-box;align-items:flex-end;flex:none;background:linear-gradient(#fff 3px,#f0f0f0 3px)}
  .dt{width:66.500px;text-align:center;background:#ececec;border:1px solid #dcdcdc;box-sizing:border-box;line-height:13px;color:#4a4a4a;border-bottom:0}
  .dt.act{background:#fff;line-height:15px;width:68px;border-color:#e4e4e4;align-self:flex-end}
  .pane{background:#fff;margin:0 5px 0 3px;height:192px;box-sizing:border-box;padding:0 6px 0 7px;flex:none;display:flex;flex-direction:column}
  .aci{line-height:11px;color:#333;margin-bottom:2px}
  .pal{display:grid;grid-template-columns:repeat(24,1fr);grid-auto-rows:7.400px;gap:1px;margin-right:-2px}
  .pal i{display:block}
  .second{margin-top:5px}
  .stdrow{display:flex;justify-content:space-between;margin-top:21px;height:14px;align-items:flex-start}
  .swatches{display:flex;margin-left:1px;align-items:center;height:14px;background:#f7f7f7;padding:0 1px}
  .swatches i{width:11px;height:12px;margin-right:1.500px;display:block}
  .swatches .cur-w{width:13px;height:13px;background:#fff;border:1.500px solid #111;box-sizing:border-box;margin-right:2px}
  .swatches .tight{width:10px;margin-right:1px}
  .bybtns{display:flex;gap:3px;color:#888}
  .bybtns span{width:50.500px;height:13px;background:#c9c9c9;text-align:center;line-height:13px}
  .lowrow{display:flex;justify-content:space-between;margin-top:1px;align-items:flex-start}
  .lowleft{width:133px}
  .two{width:max-content;margin-top:4px}
  label{display:block;line-height:10px;margin-top:7px;color:#444}
  .cinput{height:14px;width:131px;border:1px solid #2f7fb0;box-sizing:border-box;padding-left:1px;display:flex;align-items:center;background:#fff;margin-left:1px}
  .cinput span{background:#3a6fb6;color:#fff;line-height:10px}
  .preview{width:48px;height:46px;margin:6px 10px 0 0}
  .d-btns{display:flex;justify-content:flex-end;gap:4px;padding:8px 9px 0 0}
  .btn{width:50px;height:15px;background:#e1e1e1;border:1px solid #adadad;box-sizing:border-box;text-align:center;line-height:13px;color:#333}
  .btn.def{border:1.500px solid #1d6a9e;line-height:12px}

  .cursor{position:absolute;left:600px;top:279px;width:9px;height:13px}

  .toast{position:absolute;left:1130px;top:645px;width:150px;height:54px;background:#ffffe1;border-radius:10px 0 0 10px;box-sizing:border-box;padding:5px 0 0 10px;color:#222;font-size:8.300px;white-space:nowrap}
  .t-h{display:flex;align-items:center;gap:7px;font-weight:600;font-size:8.500px;height:13px;margin-left:-5px}
  .info{width:11px;height:11px}
  .t-b{margin-top:3px;line-height:12px}
  .t-l{margin-top:3px;line-height:12px;color:#2323c8;text-decoration:underline}
  .tail{position:absolute;left:118px;top:53px;width:16px;height:13px}
</style>
